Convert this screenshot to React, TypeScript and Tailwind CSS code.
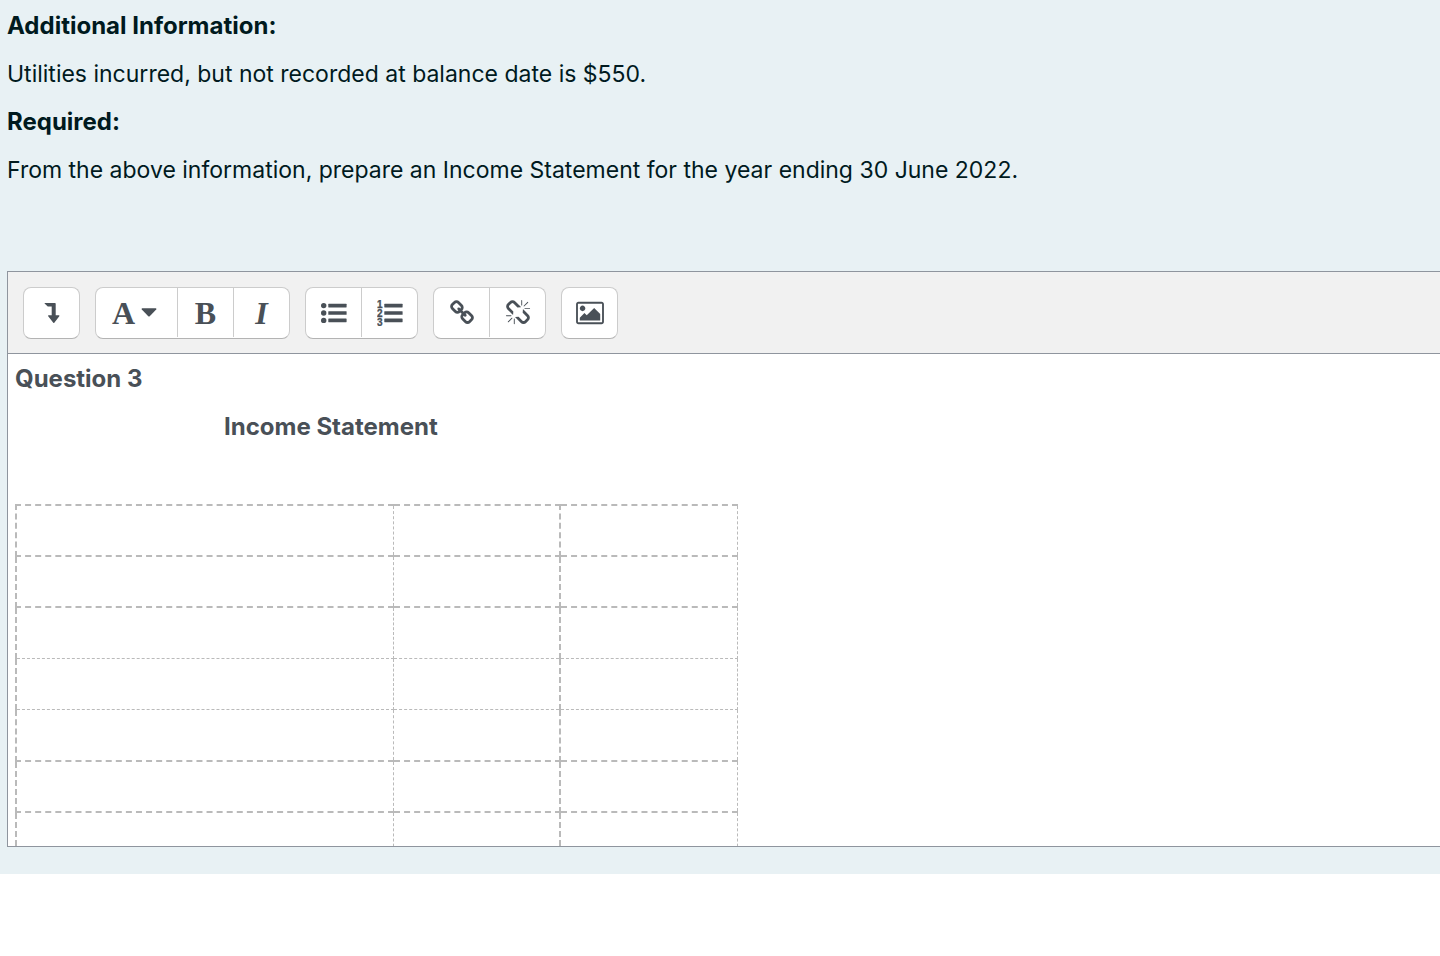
import React from 'react';
import clsx from 'clsx';

const LINK_PATH =
  'M1520 1216q0-40-28-68l-208-208q-28-28-68-28-42 0-72 32 3 3 19 18.5t21.5 21.5 15 19 13 25.5 3.5 27.5q0 40-28 68t-68 28q-15 0-27.5-3.5t-25.5-13-19-15-21.5-21.5-18.5-19q-33 31-33 73 0 40 28 68l206 207q27 27 68 27 40 0 68-26l147-146q28-28 28-67zm-703-705q0-40-28-68l-206-207q-28-28-68-28-39 0-68 27l-147 146q-28 28-28 67 0 40 28 68l208 208q27 27 68 27 42 0 72-31-3-3-19-18.5t-21.5-21.5-15-19-13-25.5-3.5-27.5q0-40 28-68t68-28q15 0 27.5 3.5t25.5 13 19 15 21.5 21.5 18.5 19q33-31 33-73zm895 705q0 120-85 203l-147 146q-83 83-203 83-121 0-204-85l-206-207q-83-83-83-203 0-123 88-209l-88-88q-86 88-208 88-120 0-204-84l-208-208q-84-84-84-204t85-203l147-146q83-83 203-83 121 0 204 85l206 207q83 83 83 203 0 123-88 209l88 88q86-88 208-88 120 0 204 84l208 208q84 84 84 204z';

const UNLINK_PATH =
  'M503 1271l-256 256q-10 9-23 9-12 0-23-9-9-10-9-23t9-23l256-256q10-9 23-9t23 9q9 10 9 23t-9 23zm169 41v320q0 14-9 23t-23 9-23-9-9-23v-320q0-14 9-23t23-9 23 9 9 23zm-224-224q0 14-9 23t-23 9h-320q-14 0-23-9t-9-23 9-23 23-9h320q14 0 23 9t9 23zm1264 128q0 120-85 203l-147 146q-83 83-203 83-121 0-204-85l-334-335q-21-21-42-56l239-18 273 274q28 28 68 27.5t68-27.5l147-146q28-28 28-67 0-40-28-68l-274-275 18-239q35 21 56 42l336 336q84 86 84 204zm-617-724l-239 18-273-274q-28-28-68-28-39 0-68 27l-147 146q-28 28-28 67 0 40 28 68l274 274-18 240q-35-21-56-42l-336-336q-84-86-84-204 0-120 85-203l147-146q83-83 203-83 121 0 204 85l334 335q21 21 42 56zm633 84q0 14-9 23t-23 9h-320q-14 0-23-9t-9-23 9-23 23-9h320q14 0 23 9t9 23zm-544-544v320q0 14-9 23t-23 9-23-9-9-23v-320q0-14 9-23t23-9 23 9 9 23zm407 151l-256 256q-11 9-23 9t-23-9q-9-10-9-23t9-23l256-256q10-9 23-9t23 9q9 10 9 23t-9 23z';

const PICTURE_PATH =
  'M576 576q0 80-56 136t-136 56-136-56-56-136 56-136 136-56 136 56 56 136zm1024 384v448h-1408v-192l320-320 160 160 512-512zm96-704h-1600q-13 0-22.5 9.5t-9.5 22.5v1216q0 13 9.5 22.5t22.5 9.5h1600q13 0 22.5-9.5t9.5-22.5v-1216q0-13-9.5-22.5t-22.5-9.5zm160 32v1216q0 66-47 113t-113 47h-1600q-66 0-113-47t-47-113v-1216q0-66 47-113t113-47h1600q66 0 113 47t47 113z';

const GlyphIcon = ({ path }: { path: string }) => (
  <svg viewBox="0 0 1792 1792" width="26" height="26" fill="currentColor" className="overflow-visible" aria-hidden="true">
    <path d={path} />
  </svg>
);

const ExpandIcon = () => (
  <svg viewBox="0 0 16 22" width="16" height="22" fill="currentColor" aria-hidden="true">
    <path d="M.8 1H11q.7 0 .7.7V13.300h3.200q.9 0 .4.900L10.300 20.700q-.5.600-1 0L4.200 14.200q-.5-.9.400-.9H7.700V4.600H4.200Q3.800 4.600 3.500 4.300L.6 1.500Q.4 1 .8 1z" />
  </svg>
);

const BulletListIcon = () => (
  <svg viewBox="0 0 26 22" width="26" height="22" fill="currentColor" aria-hidden="true">
    <circle cx="2.700" cy="3.600" r="2.700" />
    <circle cx="2.700" cy="11" r="2.700" />
    <circle cx="2.700" cy="18.400" r="2.700" />
    <rect x="7.300" y="1.800" width="18.300" height="3.600" rx=".4" />
    <rect x="7.300" y="9.200" width="18.300" height="3.600" rx=".4" />
    <rect x="7.300" y="16.600" width="18.300" height="3.600" rx=".4" />
  </svg>
);

const NumberListIcon = () => (
  <svg viewBox="0 0 26 26" width="26" height="26" fill="currentColor" aria-hidden="true">
    <g fontFamily="Liberation Sans, sans-serif" fontSize="10" fontWeight="700" stroke="currentColor" strokeWidth=".3">
      <text x="0" y="7.500">1</text>
      <text x="0" y="16.500">2</text>
      <text x="0" y="25.500">3</text>
    </g>
    <rect x="7.300" y="3.800" width="18.300" height="3.600" rx=".4" />
    <rect x="7.300" y="11.200" width="18.300" height="3.600" rx=".4" />
    <rect x="7.300" y="18.600" width="18.300" height="3.600" rx=".4" />
  </svg>
);

const letterClass = 'font-["Liberation_Serif",serif] text-[32px] leading-8 font-bold';

const toolGroups = [
  [{ label: 'Show more buttons', icon: <ExpandIcon /> }],
  [
    {
      label: 'Paragraph styles',
      wide: true,
      icon: (
        <>
          <span className={letterClass}>A</span>
          <svg viewBox="0 0 16 9" width="16" height="9" fill="currentColor" aria-hidden="true">
            <path d="M1.200.3h13.600q1.100.3.400 1.200L8.700 8.200q-.7.700-1.400 0L.8 1.500Q.1.600 1.200.3z" />
          </svg>
        </>
      ),
    },
    { label: 'Bold', icon: <span className={letterClass}>B</span> },
    { label: 'Italic', icon: <span className={clsx(letterClass, 'italic')}>I</span> },
  ],
  [
    { label: 'Unordered list', icon: <BulletListIcon /> },
    { label: 'Ordered list', icon: <NumberListIcon /> },
  ],
  [
    { label: 'Link', icon: <GlyphIcon path={LINK_PATH} /> },
    { label: 'Unlink', icon: <GlyphIcon path={UNLINK_PATH} /> },
  ],
  [{ label: 'Insert or edit image', icon: <GlyphIcon path={PICTURE_PATH} /> }],
];

// true = thick bottom line under the row
const rows = [true, true, false, false, true, true, true];

const App = () => {
  return (
    <main className="min-h-screen bg-white font-[Inter,sans-serif] text-[23px] leading-9">
      <section className="bg-[#e8f1f4] pt-2 pb-[27px] pl-[7px] text-[#001a1e]">
        <div className="space-y-3">
          <p className="text-2xl/9 font-bold">Additional Information:</p>
          <p>Utilities incurred, but not recorded at balance date is $550.</p>
          <p className="text-2xl/9 font-bold">Required:</p>
          <p>From the above information, prepare an Income Statement for the year ending 30 June 2022.</p>
        </div>

        {/* Editor */}
        <div className="mt-[83px] border-y border-l border-[#8f959e] text-[#495057]">
          <div role="toolbar" aria-label="Editor" className="flex flex-wrap gap-[15px] border-b border-[#8f959e] bg-[#f1f1f1] p-[15px] pb-[14px]">
            {toolGroups.map((group, i) => (
              <div key={i} className="flex h-[52px] rounded-lg border border-[#ccc] border-b-[#b3b3b3] bg-white pb-px">
                {group.map((tool, j) => (
                  <button
                    key={tool.label}
                    type="button"
                    aria-label={tool.label}
                    title={tool.label}
                    className={clsx(
                      'flex items-center justify-center',
                      'wide' in tool ? 'w-[82px] gap-1.5 pr-1' : j < group.length - 1 ? 'w-14' : 'w-[55px]',
                      j < group.length - 1 && 'border-r border-[#ccc]'
                    )}
                  >
                    {tool.icon}
                  </button>
                ))}
              </div>
            ))}
          </div>

          <div
            role="textbox"
            aria-label="Answer"
            aria-multiline="true"
            contentEditable
            suppressContentEditableWarning
            className="h-[492px] overflow-hidden bg-white px-[7px] pt-[7px]"
          >
            <p className="mb-3 text-2xl/9 font-bold">Question 3</p>
            <p className="mb-3 pl-[209px] text-2xl/9 font-bold">Income Statement</p>
            <p className="mb-[11px]">
              <br />
            </p>
            <table className="w-[721px] table-fixed border-collapse">
              <colgroup>
                <col className="w-[377px]" />
                <col className="w-[167px]" />
                <col className="w-[177px]" />
              </colgroup>
              <tbody>
                {rows.map((thick, i) => (
                  <tr key={i} className={i === 4 ? 'h-[52px]' : 'h-[51px]'}>
                    {['border-l-2 border-r', 'border-l border-r-2', 'border-l-2 border-r'].map((sides, j) => (
                      <td
                        key={j}
                        className={clsx('border-dashed border-[#bababa]', sides, i === 0 && 'border-t-2', thick ? 'border-b-2' : 'border-b')}
                      />
                    ))}
                  </tr>
                ))}
              </tbody>
            </table>
          </div>
        </div>
      </section>
    </main>
  );
};

export default App;
